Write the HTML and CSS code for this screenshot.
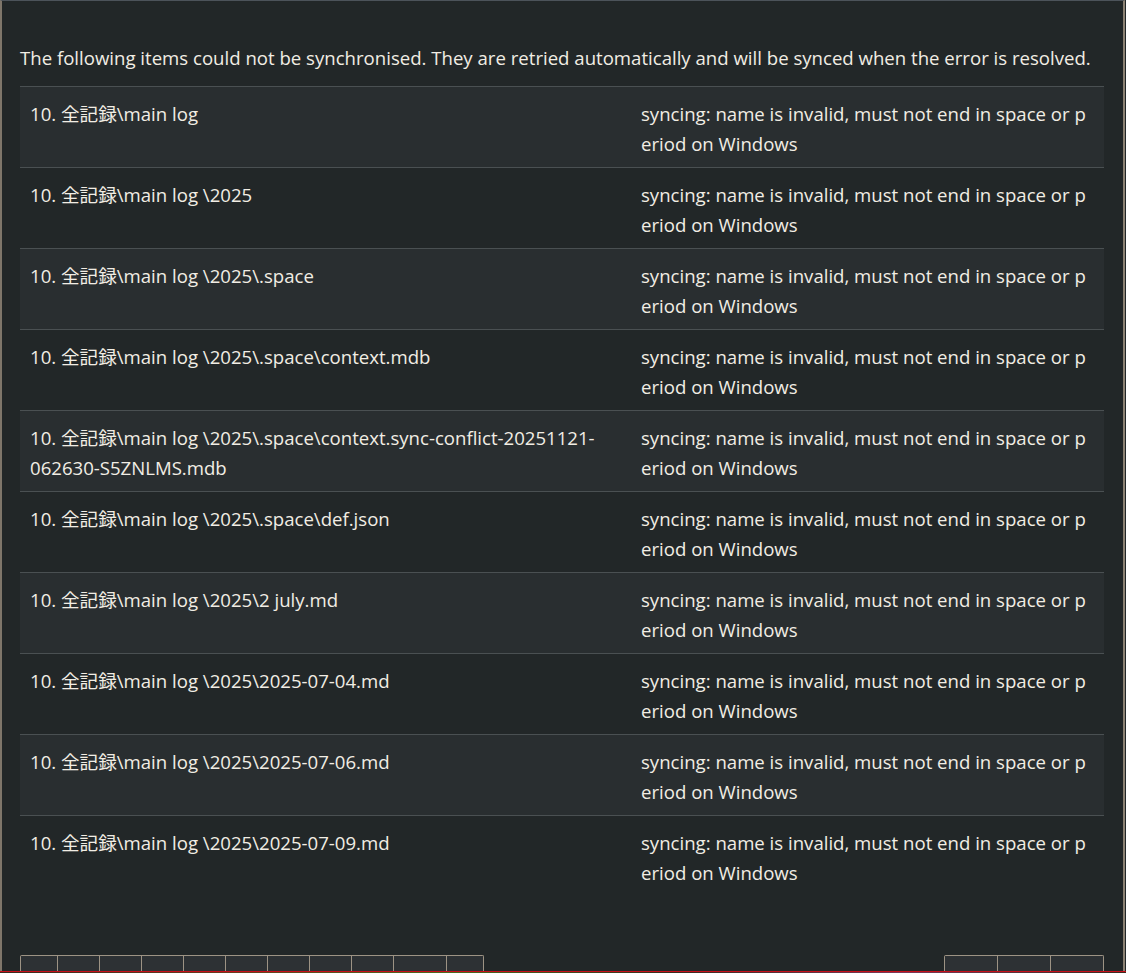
FILE: index.html
```html
<!DOCTYPE html>
<html lang="en">
<head>
<meta charset="utf-8">
<title>Failed items</title>
<link rel="stylesheet" href="styles.css">
</head>
<body>
<div class="window">
  <div class="content">
    <p class="intro">The following items could not be synchronised. They are retried automatically and will be synced when the error is resolved.</p>
    <table class="items">
      <colgroup><col class="c-path"><col class="c-err"></colgroup>
      <tbody>
        <tr><td>10. 全記録\main log</td><td class="err">syncing: name is invalid, must not end in space or period on Windows</td></tr>
        <tr><td>10. 全記録\main log \2025</td><td class="err">syncing: name is invalid, must not end in space or period on Windows</td></tr>
        <tr><td>10. 全記録\main log \2025\.space</td><td class="err">syncing: name is invalid, must not end in space or period on Windows</td></tr>
        <tr><td>10. 全記録\main log \2025\.space\context.mdb</td><td class="err">syncing: name is invalid, must not end in space or period on Windows</td></tr>
        <tr><td>10. 全記録\main log \2025\.space\context.sync-conflict-20251121-062630-S5ZNLMS.mdb</td><td class="err">syncing: name is invalid, must not end in space or period on Windows</td></tr>
        <tr><td>10. 全記録\main log \2025\.space\def.json</td><td class="err">syncing: name is invalid, must not end in space or period on Windows</td></tr>
        <tr><td>10. 全記録\main log \2025\2 july.md</td><td class="err">syncing: name is invalid, must not end in space or period on Windows</td></tr>
        <tr><td>10. 全記録\main log \2025\2025-07-04.md</td><td class="err">syncing: name is invalid, must not end in space or period on Windows</td></tr>
        <tr><td>10. 全記録\main log \2025\2025-07-06.md</td><td class="err">syncing: name is invalid, must not end in space or period on Windows</td></tr>
        <tr><td>10. 全記録\main log \2025\2025-07-09.md</td><td class="err">syncing: name is invalid, must not end in space or period on Windows</td></tr>
      </tbody>
    </table>
    <div class="footer">
      <div class="pager">
        <span class="pbtn w36"></span><span class="pbtn w42"></span><span class="pbtn w42"></span><span class="pbtn w42"></span><span class="pbtn w42"></span><span class="pbtn w42"></span><span class="pbtn w42"></span><span class="pbtn w42"></span><span class="pbtn w42"></span><span class="pbtn w53"></span><span class="pbtn w36"></span>
      </div>
      <div class="pager">
        <span class="pbtn w53"></span><span class="pbtn w53"></span><span class="pbtn w53"></span>
      </div>
    </div>
  </div>
</div>
<div class="desk"></div>
</body>
</html>
```
FILE: styles.css
```css
html, body {
  margin: 0;
  padding: 0;
  background: #222728;
  overflow: hidden;
}
body {
  width: 1126px;
  height: 973px;
  font-family: "Open Sans", "Noto Sans CJK JP", sans-serif;
  color: #f1ede4;
}
.window {
  box-sizing: border-box;
  width: 1125px;
  height: 971px;
  border-left: 2px solid #7f766a;
  border-right: 2px solid #8c8274;
  border-top: 1px solid #4c535a;
  background: #222728;
  overflow: hidden;
}
.content {
  padding: 0 19px 0 18px;
}
.intro {
  margin: 0;
  padding-top: 44px;
  height: 41px;
  font-size: 18.6px;
  line-height: 26px;
  white-space: nowrap;
}
.items {
  width: 1084px;
  border-collapse: collapse;
  table-layout: fixed;
  font-size: 18.6px;
  line-height: 30px;
}
.c-path { width: 611px; }
.c-err { width: 473px; }
.items td {
  vertical-align: top;
  padding: 12px 10px 8px;
  height: 60px;
  border-top: 1px solid #4a5052;
}
.items td.err { word-break: break-all; }
.items tr:nth-child(odd) td { background: #292e30; }
.items tr:nth-child(even) td { background: #222728; }
.footer {
  display: flex;
  justify-content: space-between;
  margin-top: 59px;
}
.pager {
  display: flex;
  height: 30px;
  border: 1px solid #9d9384;
  border-bottom: none;
  border-radius: 2px 2px 0 0;
}
.pbtn {
  display: block;
  height: 30px;
  background: #2d3134;
  border-left: 1px solid #9d9384;
}
.pbtn:first-child { border-left: none; }
.w36 { width: 36px; }
.w42 { width: 41px; }
.w53 { width: 52px; }
.desk {
  height: 2px;
  border-top: 1px solid #c8101a;
  background: linear-gradient(90deg, #3a2a20, #6a3a20 20%, #4a6a20 40%, #3a2a20 60%, #7a3a5a 80%, #3a2a20);
}
```
